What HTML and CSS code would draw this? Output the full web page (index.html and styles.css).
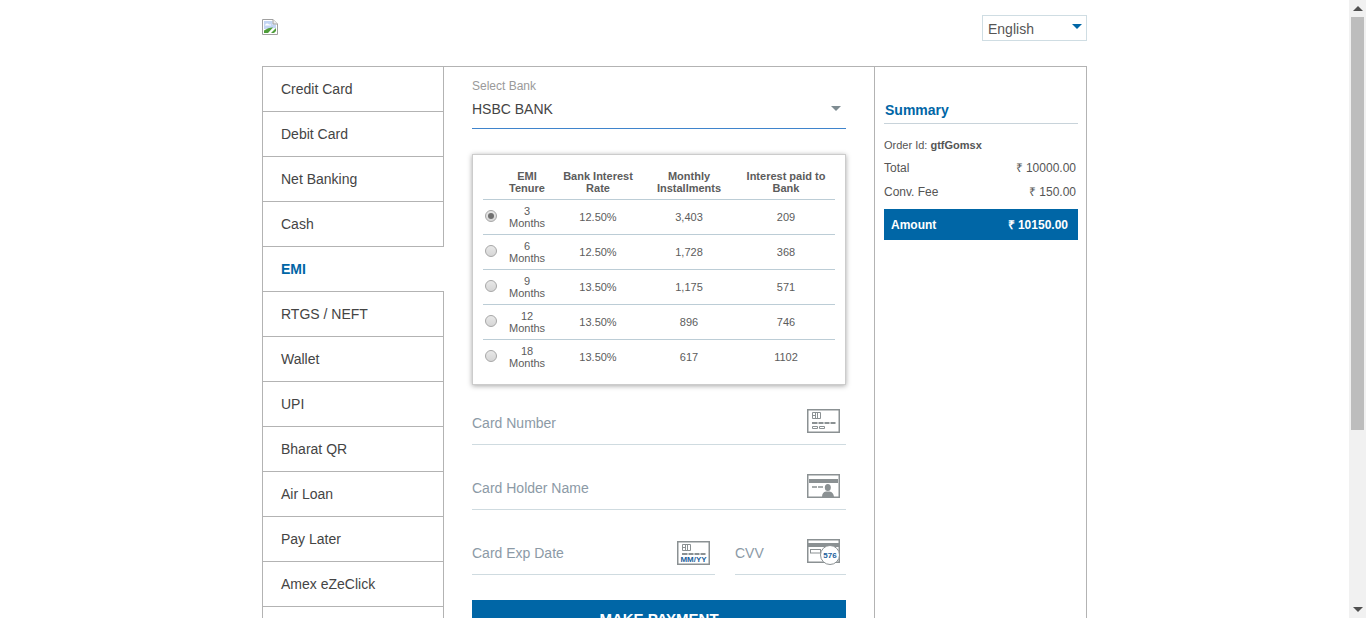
FILE: index.html
```html
<!DOCTYPE html>
<html lang="en">
<head>
  <meta charset="UTF-8">
  <title>Payment</title>
  <link rel="stylesheet" href="styles.css">
</head>
<body>
<div class="page">
  <header class="top">
    <svg class="broken" width="16" height="16" viewBox="0 0 16 16">
      <path d="M.5.5h10.500l4.500 4.500v10.500H.5z" fill="#fff" stroke="#a0a0a0"/>
      <path d="M2 2h8.500v3.500H14V9L2 10z" fill="#c3d5f3"/>
      <path d="M3 6q2-2.500 4-.5h2v1H3z" fill="#fff"/>
      <path d="M2 14v-2.500Q7 8 11 8.500l-5 5.500z" fill="#4f9e3a"/>
      <path d="M11 .5v4.500h4.500" fill="#eee" stroke="#a0a0a0"/>
      <path d="M9 14l5-5v3l-2 2z" fill="#4f9e3a"/>
    </svg>
    <div class="lang">
      <span>English</span>
      <i class="caret"></i>
    </div>
  </header>

  <div class="main">
    <nav class="nav">
      <a class="tab">Credit Card</a>
      <a class="tab">Debit Card</a>
      <a class="tab">Net Banking</a>
      <a class="tab">Cash</a>
      <a class="tab active">EMI</a>
      <a class="tab">RTGS / NEFT</a>
      <a class="tab">Wallet</a>
      <a class="tab">UPI</a>
      <a class="tab">Bharat QR</a>
      <a class="tab">Air Loan</a>
      <a class="tab">Pay Later</a>
      <a class="tab">Amex eZeClick</a>
      <div class="nav-fill"></div>
    </nav>

    <section class="form">
      <div class="bank">
        <label>Select Bank</label>
        <div class="bank-value">
          <span>HSBC BANK</span>
          <i class="caret grey"></i>
        </div>
      </div>

      <div class="emi-card">
        <table>
          <thead>
            <tr>
              <th class="c1"></th>
              <th class="c2">EMI Tenure</th>
              <th class="c3">Bank Interest Rate</th>
              <th class="c4">Monthly Installments</th>
              <th class="c5">Interest paid to Bank</th>
            </tr>
          </thead>
          <tbody>
            <tr><td class="radio-cell"><i class="radio on"></i></td><td>3 Months</td><td>12.50%</td><td>3,403</td><td>209</td></tr>
            <tr><td class="radio-cell"><i class="radio"></i></td><td>6 Months</td><td>12.50%</td><td>1,728</td><td>368</td></tr>
            <tr><td class="radio-cell"><i class="radio"></i></td><td>9 Months</td><td>13.50%</td><td>1,175</td><td>571</td></tr>
            <tr><td class="radio-cell"><i class="radio"></i></td><td>12 Months</td><td>13.50%</td><td>896</td><td>746</td></tr>
            <tr><td class="radio-cell"><i class="radio"></i></td><td>18 Months</td><td>13.50%</td><td>617</td><td>1102</td></tr>
          </tbody>
        </table>
      </div>

      <div class="field first">
        <span>Card Number</span>
        <svg class="ico" width="33" height="24" viewBox="0 0 33 24">
          <rect x=".75" y=".75" width="31.500" height="22.500" fill="none" stroke="#8b9193" stroke-width="1.500"/>
          <path d="M5.500 3.500h8v6h-8zM8.500 3.500v6M10.500 3.500v6M5.500 6.500h3" fill="none" stroke="#8b9193"/>
          <path d="M5 14h5.500M11.500 14h5M17.500 14h5M23.500 14h5" stroke="#8b9193" stroke-width="2"/>
          <path d="M5.500 17.500h5v2h-5zM12.500 17.500h5v2h-5z" fill="none" stroke="#8b9193"/>
        </svg>
      </div>

      <div class="field">
        <span>Card Holder Name</span>
        <svg class="ico" width="33" height="24" viewBox="0 0 33 24">
          <rect x=".75" y=".75" width="31.500" height="22.500" fill="none" stroke="#8b9193" stroke-width="1.500"/>
          <rect x="2" y="5" width="29" height="4" fill="#8b9193"/>
          <path d="M5 13h5M11 13h5" stroke="#8b9193" stroke-width="1.500"/>
          <ellipse cx="20.800" cy="13.500" rx="3" ry="3.500" fill="#8b9193"/>
          <path d="M15 23q0-5 4-5.500h3.500q4 .5 4.500 5.500z" fill="#8b9193"/>
        </svg>
      </div>

      <div class="field-row">
        <div class="field exp">
          <span>Card Exp Date</span>
          <svg class="ico exp-ico" width="33" height="24" viewBox="0 0 33 24">
            <rect x=".75" y=".75" width="31.500" height="22.500" fill="none" stroke="#8b9193" stroke-width="1.500"/>
            <path d="M5.500 3.500h8v6h-8zM8.500 3.500v6M10.500 3.500v6M5.500 6.500h3" fill="none" stroke="#8b9193"/>
            <path d="M5 13h5.500M11.500 13h5M17.500 13h5M23.500 13h5" stroke="#8b9193" stroke-width="2"/>
            <text class="ico-text" x="16.500" y="21" text-anchor="middle">MM/YY</text>
          </svg>
        </div>
        <div class="field cvv">
          <span>CVV</span>
          <svg class="ico cvv-ico" width="34" height="27" viewBox="0 0 34 27">
            <rect x=".75" y=".75" width="31.500" height="22.500" fill="none" stroke="#8b9193" stroke-width="1.500"/>
            <rect x="1" y="4" width="31" height="4" fill="#8b9193"/>
            <rect x="3.500" y="10.500" width="10" height="3.500" fill="none" stroke="#8b9193"/>
            <circle cx="23" cy="16" r="9.500" fill="#fff" stroke="#8b9193"/>
            <text class="ico-text" x="23" y="19" text-anchor="middle">576</text>
          </svg>
        </div>
      </div>

      <button class="pay">MAKE PAYMENT</button>
    </section>

    <aside class="summary">
      <h3>Summary</h3>
      <p class="order">Order Id: <b>gtfGomsx</b></p>
      <div class="line"><span>Total</span><span>₹ 10000.00</span></div>
      <div class="line"><span>Conv. Fee</span><span>₹ 150.00</span></div>
      <div class="amount"><span>Amount</span><span>₹ 10150.00</span></div>
    </aside>
  </div>
</div>

<div class="scrollbar">
  <i class="arrow up"></i>
  <div class="track"><div class="thumb"></div></div>
  <i class="arrow down"></i>
</div>
</body>
</html>
```

FILE: styles.css
```css
* { box-sizing: border-box; }
body { margin: 0; padding-right: 17px; font-family: "Liberation Sans", Arial, sans-serif; background: #fff; color: #444; }

.scrollbar { position: fixed; top: 0; right: 0; bottom: 0; width: 17px; display: flex; flex-direction: column; background: #f1f1f1; }
.arrow { display: block; flex: none; width: 0; height: 0; margin: 6px auto; border-left: 5px solid transparent; border-right: 5px solid transparent; }
.arrow.up { border-bottom: 5px solid #505050; }
.arrow.down { border-top: 5px solid #505050; }
.track { flex: 1; padding: 0 2px; }
.thumb { height: 413px; background: #bdbdbd; }

.page { width: 825px; margin: 0 auto; }

.top { height: 66px; display: flex; justify-content: space-between; align-items: flex-start; }
.broken { margin-top: 19px; }
.lang { width: 105px; height: 26px; margin-top: 15px; padding: 2px 4px 0 5px; border: 1px solid #cfdde3; display: flex; align-items: center; justify-content: space-between; font-size: 14px; color: #555; }
.caret { display: block; width: 0; height: 0; border-left: 5px solid transparent; border-right: 5px solid transparent; border-top: 5px solid #0066a6; margin-bottom: 5px; }
.caret.grey { border-top-color: #7f8c92; margin: 0; }

.main { display: flex; height: 808px; border: 1px solid #b3b3b3; }

.nav { width: 181px; display: flex; flex-direction: column; }
.tab { height: 45px; padding-left: 18px; display: flex; align-items: center; font-size: 14px; color: #444; border-bottom: 1px solid #b3b3b3; border-right: 1px solid #b3b3b3; }
.tab.active { color: #0066a6; font-weight: bold; border-right: 0; }
.nav-fill { flex: 1; border-right: 1px solid #b3b3b3; }

.form { width: 430px; padding: 12px 28px 0; }

.bank label { display: block; font-size: 12px; line-height: 14px; color: #9a9a9a; }
.bank-value { height: 36px; display: flex; align-items: center; justify-content: space-between; padding: 0 0 4px; font-size: 14px; color: #444; border-bottom: 1px solid #3f84cc; }
.bank-value .caret { margin-right: 5px; }

.emi-card { margin-top: 25px; height: 231px; padding: 14px 10px 0; border: 1px solid #ccc; box-shadow: 0 1px 5px rgba(0, 0, 0, .35); }
table { width: 352px; border-collapse: collapse; table-layout: fixed; font-size: 11px; color: #5c5c5c; }
th { height: 30px; padding: 1px 0 0; line-height: 12px; font-weight: bold; color: #5c5c5c; text-align: center; vertical-align: top; border-bottom: 1px solid #bccdd6; }
td { height: 35px; padding: 0; line-height: 12px; text-align: center; border-bottom: 1px solid #bccdd6; }
tbody tr:last-child td { border-bottom: 0; }
.c1 { width: 16px; }
.c2 { width: 56px; padding: 1px 8px 0; }
.c3 { width: 86px; padding: 1px 6px 0; }
.c4 { width: 96px; padding: 1px 10px 0; }
.c5 { width: 98px; padding: 1px 6px 0; }
td:nth-child(2) { padding: 0 10px; }
.radio-cell { text-align: left; vertical-align: middle; padding-bottom: 2px; }
.radio { display: block; width: 12px; height: 12px; margin-left: 2px; border-radius: 50%; border: 1px solid #a8a8a8; background: linear-gradient(#e8e8e8, #d6d6d6); position: relative; }
.radio.on::after { content: ""; position: absolute; left: 2px; top: 2px; width: 6px; height: 6px; border-radius: 50%; background: #707070; }

.field { height: 65px; display: flex; align-items: flex-end; justify-content: space-between; padding: 0 6px 0 0; font-size: 14px; color: #8c9aa6; border-bottom: 1px solid #cfdbe0; }
.field.first { height: 60px; }
.field span { padding-bottom: 13px; }
.ico { display: block; margin-bottom: 11px; }
.ico-text { font-family: "Liberation Sans", Arial, sans-serif; font-size: 8px; font-weight: bold; fill: #1c5f9c; }
.field-row { display: flex; gap: 20px; }
.exp { width: 243px; }
.cvv { width: 111px; }
.exp-ico { margin-bottom: 9px; margin-right: -1px; }
.cvv-ico { margin-bottom: 8px; margin-right: -1px; }

.pay { display: block; width: 100%; height: 36px; margin-top: 25px; padding: 0; border: 0; background: #0066a6; color: #fff; font-family: inherit; font-size: 15px; font-weight: bold; }

.summary { flex: 1; border-left: 1px solid #b3b3b3; padding: 35px 8px 0 9px; }
.summary h3 { margin: 0; height: 22px; padding-left: 1px; font-size: 14px; line-height: 17px; color: #0066a6; border-bottom: 1px solid #c8d3da; }
.order { margin: 14px 0 0; font-size: 11px; line-height: 14px; color: #555; }
.line { display: flex; justify-content: space-between; padding-right: 2px; margin-top: 10px; font-size: 12px; line-height: 14px; color: #555; }
.order + .line { margin-top: 9px; }
.amount { display: flex; justify-content: space-between; align-items: center; height: 31px; margin-top: 10px; padding: 0 10px 0 7px; background: #0066a6; color: #fff; font-size: 12px; font-weight: bold; }
```
